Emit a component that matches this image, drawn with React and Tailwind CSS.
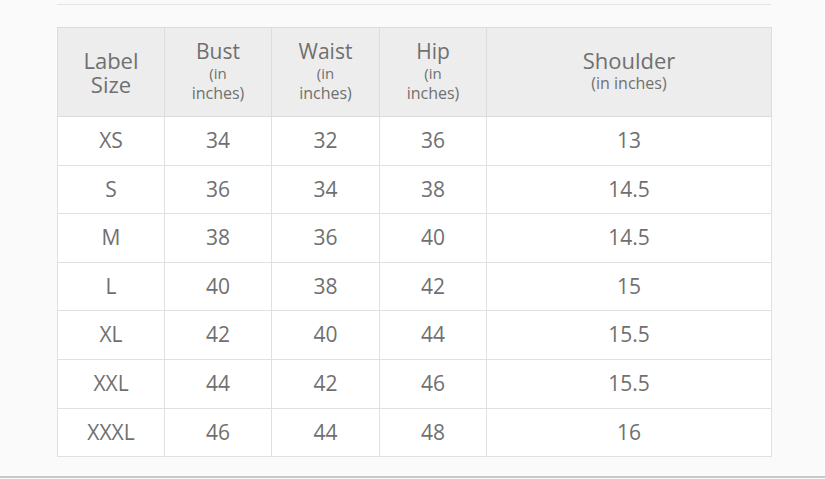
import React from 'react';

const rows = [
  ['XS', '34', '32', '36', '13'],
  ['S', '36', '34', '38', '14.5'],
  ['M', '38', '36', '40', '14.5'],
  ['L', '40', '38', '42', '15'],
  ['XL', '42', '40', '44', '15.5'],
  ['XXL', '44', '42', '46', '15.5'],
  ['XXXL', '46', '44', '48', '16'],
];

const Sub = ({ title }) => (
  <div className="flex flex-col items-center">
    <span className="text-[21px] leading-[24px]">{title}</span>
    <span className="text-[15px] leading-[20px]">(in</span>
    <span className="text-[16px] leading-[21px]">inches)</span>
  </div>
);

export default function App() {
  return (
    <div
      className="w-[825px] h-[479px] bg-[#fafafa] text-[#707070] overflow-hidden flex flex-col"
      style={{ fontFamily: '"Open Sans", "DejaVu Sans", sans-serif' }}
    >
      <div className="ml-[57px] w-[714px] mt-[4px] h-px bg-[#e4e4e4]" />
      <div className="ml-[57px] mt-[22px] w-[715px]">
        <table className="border-collapse w-full table-fixed">
          <colgroup>
            <col className="w-[107px]" />
            <col className="w-[107px]" />
            <col className="w-[108px]" />
            <col className="w-[107px]" />
            <col />
          </colgroup>
          <thead>
            <tr className="h-[89px] bg-[#ededed]">
              <th className="border border-[#dcdcdc] font-normal">
                <div className="flex flex-col items-center text-[22px] leading-[24px]">
                  <span>Label</span>
                  <span>Size</span>
                </div>
              </th>
              <th className="border border-[#dcdcdc] font-normal pb-[2px]"><Sub title="Bust" /></th>
              <th className="border border-[#dcdcdc] font-normal pb-[2px]"><Sub title="Waist" /></th>
              <th className="border border-[#dcdcdc] font-normal pb-[2px]"><Sub title="Hip" /></th>
              <th className="border border-[#dcdcdc] font-normal pb-[4px]">
                <div className="flex flex-col items-center">
                  <span className="text-[22px] leading-[26px]">Shoulder</span>
                  <span className="text-[16px] leading-[21px]">(in inches)</span>
                </div>
              </th>
            </tr>
          </thead>
          <tbody>
            {rows.map((r) => (
              <tr key={r[0]} className="h-[48.6px] bg-white">
                {r.map((c, i) => (
                  <td key={i} className="border border-[#e0e0e0] text-center text-[21px]">
                    {c}
                  </td>
                ))}
              </tr>
            ))}
          </tbody>
        </table>
      </div>
      <div className="mt-auto mb-[1px] h-[2px] bg-[#c8c8c8]" />
    </div>
  );
}
